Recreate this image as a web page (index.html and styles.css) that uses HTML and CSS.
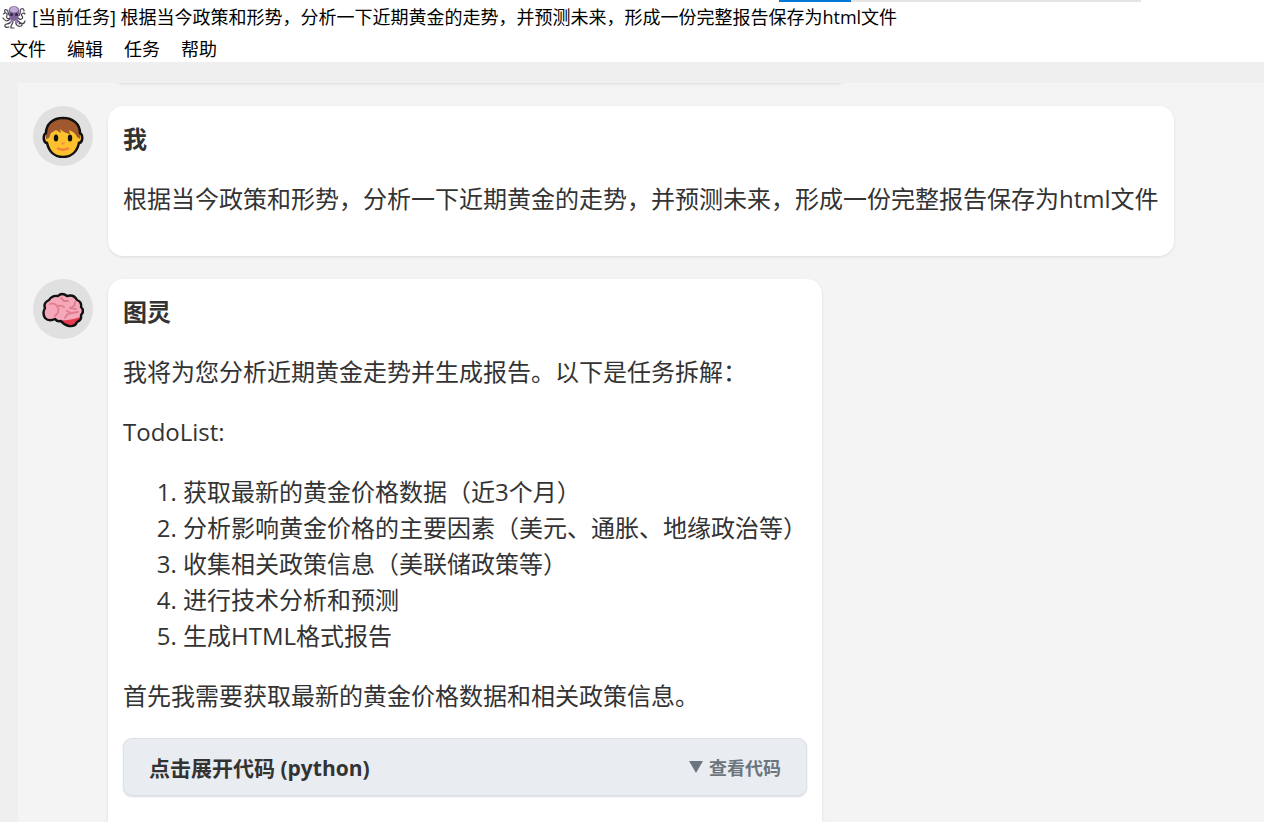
FILE: index.html
```html
<!DOCTYPE html>
<html lang="zh-CN">
<head>
    <meta charset="UTF-8">
    <meta name="viewport" content="width=device-width, initial-scale=1.0">
    <title>[当前任务] 根据当今政策和形势</title>
    <link rel="stylesheet" href="styles.css">
</head>
<body>
    <header class="titlebar">
        <svg class="app-icon" viewBox="0 0 24 24" aria-hidden="true">
            <g fill="none" stroke="#45404f" stroke-width="1.2" stroke-linecap="round">
                <path d="M8 13C5 15 4 12 5 10S3 7 1.500 9"/>
                <path d="M8 14C5 17 3 16 1 13"/>
                <path d="M9 16C8 20 4 18 3 20S5 23 7 22"/>
                <path d="M11 16C11 20 8 20 9 23H12"/>
                <path d="M14 16C13 20 16 22 19 21S18 17 17 19"/>
                <path d="M15 15C19 19 22 20 23 16"/>
                <path d="M16 13C19 16 22 13 20 11S22 7 23 9"/>
                <path d="M16 11C20 10 17 5 19 4S22 4 22 6"/>
                <path d="M8 11C5 9 7 6 5 5S2 5 3 7"/>
            </g>
            <path d="M12 1C8 1 6 4 7 8L8 14Q12 18 16 14L17 8C18 4 16 1 12 1Z" fill="#7c6596"/>
            <path d="M12 1.500C9 1.500 8 4 8 6Q12 9 16 6C16 4 15 1.500 12 1.500Z" fill="#c3abd8"/>
            <circle cx="9.500" cy="9.500" r="1.500" fill="#342547"/>
            <circle cx="14.500" cy="9.500" r="1.500" fill="#342547"/>
            <path d="M10 15L8 18M14 15L16 18" stroke="#9c77bd" stroke-width="1.500"/>
        </svg>
        <span class="title">[当前任务] 根据当今政策和形势，分析一下近期黄金的走势，并预测未来，形成一份完整报告保存为html文件</span>
        <div class="progress"><div class="progress-bar"></div></div>
    </header>
    <nav class="menubar">
        <button>文件</button>
        <button>编辑</button>
        <button>任务</button>
        <button>帮助</button>
    </nav>

    <main class="chat">
        <div class="bubble previous"></div>

        <div class="message">
            <div class="avatar">
                <svg viewBox="0 0 42 42" role="img" aria-label="我">
                    <path d="M21 2C11 2 4 8 4 17Q1 19 2 24Q3 27 5 27C7 36 13 41 21 41S35 36 37 27Q39 27 40 24Q41 19 38 17C38 8 31 2 21 2Z" fill="#fcc12d"/>
                    <path d="M21 3C11 3 4 9 4 18V23L7 22L9 17L14 14L19 17L18 13Q22 17 28 18L27 14Q33 16 35 21L38 23V17C38 8 31 3 21 3Z" fill="#a0592f"/>
                    <path d="M21 2C11 2 4 8 4 17Q1 19 2 24Q3 27 5 27C7 36 13 41 21 41S35 36 37 27Q39 27 40 24Q41 19 38 17C38 8 31 2 21 2Z" fill="none" stroke="#111" stroke-width="2.500"/>
                    <ellipse cx="14" cy="22" rx="2.200" ry="3.500" fill="#111"/>
                    <ellipse cx="28" cy="22" rx="2.200" ry="3.500" fill="#111"/>
                    <path d="M18.500 26.500H23.500L21 29Z" fill="#f58b4b"/>
                    <path d="M16 32.500Q21 35 26 32.500" fill="none" stroke="#f3813f" stroke-width="2.500" stroke-linecap="round"/>
                </svg>
            </div>
            <div class="bubble">
                <div class="name">我</div>
                <p>根据当今政策和形势，分析一下近期黄金的走势，并预测未来，形成一份完整报告保存为html文件</p>
            </div>
        </div>

        <div class="message">
            <div class="avatar">
                <svg viewBox="0 0 42 42" role="img" aria-label="图灵">
                    <path d="M3 29Q0 24 3 19Q1 14 7 11Q10 6 16 7Q20 3 25 7Q32 5 35 11Q40 13 39 18Q43 22 39 26Q40 31 35 33Q33 38 27 37Q22 36 19 32Q15 33 13 30Q7 33 3 29Z" fill="#f5a8b9"/>
                    <path d="M20 31Q29 32 38 28Q38 32 34 33Q32 37 27 36Q22 35 20 31Z" fill="#e73b50"/>
                    <g fill="none" stroke="#df7d8d" stroke-width="1.800" stroke-linecap="round" stroke-linejoin="round">
                        <path d="M8 15Q12 13 15 17Q20 16 22 18M15 17Q18 21 15 25L13 27"/>
                        <path d="M19 9L22 12L26 12M33 13Q33 18 28 19L34 20"/>
                        <path d="M23 29Q25 24 30 24L36 23M29 24L25 22"/>
                    </g>
                    <path d="M3 29Q0 24 3 19Q1 14 7 11Q10 6 16 7Q20 3 25 7Q32 5 35 11Q40 13 39 18Q43 22 39 26Q40 31 35 33Q33 38 27 37Q22 36 19 32Q15 33 13 30Q7 33 3 29Z" fill="none" stroke="#111" stroke-width="2.400" stroke-linejoin="round"/>
                </svg>
            </div>
            <div class="bubble">
                <div class="name">图灵</div>
                <p>我将为您分析近期黄金走势并生成报告。以下是任务拆解：</p>
                <p>TodoList:</p>
                <ol>
                    <li>获取最新的黄金价格数据（近3个月）</li>
                    <li>分析影响黄金价格的主要因素（美元、通胀、地缘政治等）</li>
                    <li>收集相关政策信息（美联储政策等）</li>
                    <li>进行技术分析和预测</li>
                    <li>生成HTML格式报告</li>
                </ol>
                <p>首先我需要获取最新的黄金价格数据和相关政策信息。</p>
                <button class="code-toggle">
                    <span>点击展开代码 (python)</span>
                    <span class="hint"><svg viewBox="0 0 14 12" aria-hidden="true"><path d="M0 0H14L7 12Z" fill="currentColor"/></svg>查看代码</span>
                </button>
            </div>
        </div>
    </main>
</body>
</html>
```

FILE: styles.css
```css
* {
    box-sizing: border-box;
}

body {
    margin: 0;
    height: 100vh;
    display: flex;
    flex-direction: column;
    overflow: hidden;
    background-color: #efefef;
    color: #333;
    font-family: "Open Sans", "Noto Sans CJK SC", sans-serif;
}

button {
    border: none;
    background: none;
    font-family: inherit;
    cursor: pointer;
}

.titlebar {
    position: relative;
    display: flex;
    align-items: center;
    flex-shrink: 0;
    gap: 6px;
    height: 36px;
    padding: 0 2px;
    background-color: white;
    color: #000;
    font-size: 18px;
    line-height: 34px;
    white-space: nowrap;
}

.title {
    align-self: flex-start;
}

.app-icon {
    align-self: flex-start;
    width: 24px;
    height: 24px;
    margin-top: 5px;
}

.progress {
    position: absolute;
    top: 0;
    right: 123px;
    width: 362px;
    height: 2px;
    background-color: #e5e5e5;
}

.progress-bar {
    width: 20%;
    height: 100%;
    background-color: #0078d7;
}

.menubar {
    display: flex;
    flex-shrink: 0;
    gap: 21px;
    height: 26px;
    padding: 0 10px;
    background-color: white;
}

.menubar button {
    padding: 0;
    color: #000;
    font-size: 18px;
    line-height: 26px;
}

.chat {
    flex: 1;
    min-height: 0;
    margin: 21px 0 0 18px;
    padding: 0 15px;
    overflow: hidden;
    background-color: #f4f4f4;
    font-size: 24px;
    line-height: 36px;
}

.message {
    display: flex;
    align-items: flex-start;
    gap: 15px;
    margin-bottom: 23px;
}

.avatar {
    display: flex;
    align-items: center;
    justify-content: center;
    flex-shrink: 0;
    width: 60px;
    height: 60px;
    padding-top: 2px;
    border-radius: 50%;
    background-color: #e0e0e0;
}

.avatar svg {
    width: 42px;
    height: 42px;
}

.bubble {
    padding: 15px;
    border-radius: 15px;
    background-color: white;
    box-shadow: 0 1px 3px rgba(0, 0, 0, 0.1);
}

/* only the lower edge of the earlier message shows */
.bubble.previous {
    width: 744px;
    height: 30px;
    margin: -30px 0 23px 75px;
}

.name {
    font-weight: bold;
}

.bubble p,
.bubble ol {
    margin: 24px 0;
}

.bubble ol {
    padding-left: 60px;
}

.code-toggle {
    display: flex;
    align-items: center;
    justify-content: space-between;
    width: 100%;
    height: 58px;
    margin-bottom: 60px;
    padding: 0 25px;
    border: 1px solid #dce1e6;
    border-radius: 9px;
    background-color: #e9ecf1;
    box-shadow: 0 1px 2px #d5dbe1;
    color: #333;
    font-size: 21px;
    font-weight: bold;
}

.hint {
    display: flex;
    align-items: center;
    gap: 6px;
    color: #6c757d;
    font-size: 18px;
}

.hint svg {
    width: 14px;
    height: 12px;
}
```
